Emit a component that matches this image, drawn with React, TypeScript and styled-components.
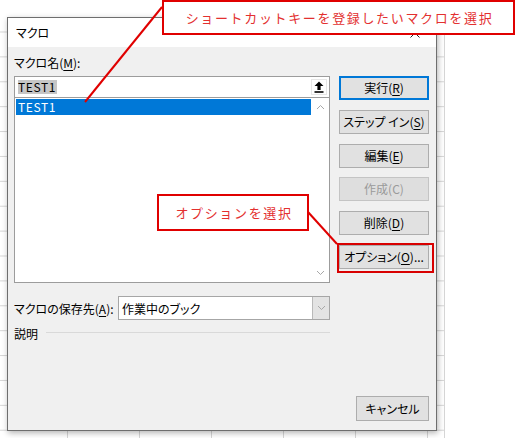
import React from "react";
import styled, { createGlobalStyle } from "styled-components";

const Global = createGlobalStyle`
  html, body { margin: 0; padding: 0; background: #fff; }
  body {
    width: 515px; height: 438px; overflow: hidden;
    font-family: "Noto Sans CJK JP", "Noto Sans", sans-serif;
  }
`;

const Page = styled.div`
  position: relative;
  width: 515px;
  height: 438px;
  overflow: hidden;
  background: #fff;
`;

const Sheet = styled.div`
  width: 445px;
  height: 438px;
  box-sizing: border-box;
  padding: 17px 0 0 7px;
  border-right: 1px solid #d6d6d6;
  background-color: #fff;
  background-image:
    linear-gradient(#fff, #fff),
    linear-gradient(to right, #d6d6d6 1px, transparent 1px),
    linear-gradient(to bottom, #d6d6d6 1px, transparent 1px);
  background-size: 100% 20px, 72px 100%, 100% 24.9px;
  background-repeat: no-repeat, repeat, repeat;
  background-position: 0 0, 67px 0, 0 6.6px;
`;

const Dialog = styled.div`
  width: 430px;
  height: 414px;
  box-sizing: border-box;
  border: 1px solid #6e6e6e;
  background: #f0f0f0;
  box-shadow: 1px 2px 6px rgba(0, 0, 0, 0.3);
  display: flex;
  flex-direction: column;
  font-size: 12px;
  color: #000;
  font-feature-settings: "palt";
`;

const TitleBar = styled.div`
  height: 29px;
  flex: none;
  background: #fff;
  display: flex;
  align-items: center;
  justify-content: space-between;
  padding: 0 16px 0 8px;
`;

const TitleText = styled.span`
  font-size: 12px;
  line-height: 16px;
`;

const Body = styled.div`
  flex: 1;
  display: flex;
  gap: 9px;
  padding: 8px 7px 9px 6px;
  min-height: 0;
`;

const LeftCol = styled.div`
  width: 316px;
  display: flex;
  flex-direction: column;
`;

const Label = styled.div<{ $mb?: number }>`
  height: 16px;
  line-height: 16px;
  white-space: nowrap;
  margin-bottom: ${(p) => p.$mb ?? 0}px;
`;

const Ul = styled.u`
  text-underline-offset: 2px;
`;

const NameInput = styled.div`
  height: 21px;
  box-sizing: border-box;
  border: 1px solid #9c9c9c;
  border-bottom: none;
  background: #fff;
  display: flex;
  align-items: center;
  padding-left: 3px;
  padding-right: 2px;
`;

const SelText = styled.span`
  background: #c6c6c6;
  line-height: 14px;
  padding: 0 1px 0 0;
  letter-spacing: 0.6px;
`;

const UpButton = styled.div`
  margin-left: auto;
  width: 16px;
  height: 16px;
  box-sizing: border-box;
  border: 1px solid #e6e6e6;
  background: #fff;
  display: flex;
  align-items: center;
  justify-content: center;
`;

const List = styled.div`
  height: 186px;
  box-sizing: border-box;
  border: 1px solid #9c9c9c;
  background: #fff;
  display: flex;
`;

const Items = styled.div`
  flex: 1;
  padding: 1px;
`;

const Item = styled.div<{ $selected?: boolean }>`
  height: 16px;
  line-height: 16px;
  padding-left: 2px;
  letter-spacing: 0.6px;
  background: ${(p) => (p.$selected ? "#0078d7" : "transparent")};
  color: ${(p) => (p.$selected ? "#fff" : "#000")};
`;

const ScrollBar = styled.div`
  width: 17px;
  display: flex;
  flex-direction: column;
  justify-content: space-between;
  align-items: center;
  padding: 6px 0 6px;
`;

const SaveRow = styled.div`
  margin-top: 13px;
  height: 24px;
  display: flex;
  align-items: center;
`;

const SaveLabel = styled.div`
  width: 104px;
  white-space: nowrap;
`;

const Select = styled.div`
  flex: 1;
  height: 24px;
  box-sizing: border-box;
  border: 1px solid #a6a6a6;
  background: #fff;
  display: flex;
  align-items: center;
`;

const SelectValue = styled.span`
  flex: 1;
  padding-left: 3px;
`;

const DropButton = styled.div`
  width: 16px;
  align-self: stretch;
  background: #e3e3e3;
  border-left: 1px solid #b9b9b9;
  display: flex;
  align-items: center;
  justify-content: center;
`;

const DescRow = styled.div`
  margin-top: 5px;
  height: 16px;
  display: flex;
  align-items: center;
  gap: 8px;
`;

const Rule = styled.div`
  flex: 1;
  height: 0;
  border-top: 1px solid #d9d9d9;
  margin-top: -1px;
`;

const RightCol = styled.div`
  width: 90px;
  display: flex;
  flex-direction: column;
  gap: 9.8px;
  padding-top: 21px;
`;

const Button = styled.div<{ $default?: boolean; $disabled?: boolean; $w?: number }>`
  height: 24px;
  flex: none;
  width: ${(p) => (p.$w ? `${p.$w}px` : "100%")};
  align-self: flex-end;
  box-sizing: border-box;
  border: ${(p) =>
    p.$default ? "2px solid #0078d7" : p.$disabled ? "1px solid #c4c4c4" : "1px solid #adadad"};
  background: ${(p) => (p.$disabled ? "#dedede" : "#e1e1e1")};
  color: ${(p) => (p.$disabled ? "#9a9a9a" : "#000")};
  display: flex;
  align-items: center;
  justify-content: center;
  white-space: nowrap;
  line-height: 16px;
`;

const CancelButton = styled(Button)`
  margin-top: auto;
  height: 25px;
`;

const Callout = styled.div<{ $x: number; $y: number; $w: number; $h: number }>`
  position: absolute;
  left: ${(p) => p.$x}px;
  top: ${(p) => p.$y}px;
  width: ${(p) => p.$w}px;
  height: ${(p) => p.$h}px;
  box-sizing: border-box;
  border: 2px solid #e00000;
  background: #fff;
  display: flex;
  align-items: center;
  justify-content: center;
  color: #e33030;
  font-family: "Noto Sans CJK JP", sans-serif;
  font-size: 13px;
  letter-spacing: 1.65px;
  white-space: nowrap;
  padding-left: 2px;
`;

const Highlight = styled.div`
  position: absolute;
  left: 337px;
  top: 243px;
  width: 97px;
  height: 30px;
  box-sizing: border-box;
  border: 2px solid #d80000;
`;

const Lines = styled.svg`
  position: absolute;
  left: 0;
  top: 0;
  pointer-events: none;
`;

const Chevron = ({ up }: { up?: boolean }) => (
  <svg width="9" height="6" viewBox="0 0 9 6">
    <path
      d={up ? "M1 5 L4.5 1.5 L8 5" : "M1 1 L4.5 4.5 L8 1"}
      fill="none"
      stroke="#a8a8a8"
      strokeWidth="1"
    />
  </svg>
);

export default function App() {
  return (
    <Page>
      <Global />
      <Sheet>
        <Dialog>
          <TitleBar>
            <TitleText>マクロ</TitleText>
            <svg width="10" height="10" viewBox="0 0 10 10">
              <path d="M0.5 0.5 L9.5 9.5 M9.5 0.5 L0.5 9.5" stroke="#222" strokeWidth="1" />
            </svg>
          </TitleBar>
          <Body>
            <LeftCol>
              <Label $mb={5}>
                マクロ名(<Ul>M</Ul>):
              </Label>
              <NameInput>
                <SelText>TEST1</SelText>
                <UpButton>
                  <svg width="10" height="12" viewBox="0 0 10 12">
                    <path d="M5 0.5 L9.5 5 H6.6 V9 H3.4 V5 H0.5 Z" fill="#000" />
                    <rect x="0.5" y="10.2" width="9" height="1.6" fill="#000" />
                  </svg>
                </UpButton>
              </NameInput>
              <List>
                <Items>
                  <Item $selected>TEST1</Item>
                </Items>
                <ScrollBar>
                  <Chevron up />
                  <Chevron />
                </ScrollBar>
              </List>
              <SaveRow>
                <SaveLabel>
                  マクロの保存先(<Ul>A</Ul>):
                </SaveLabel>
                <Select>
                  <SelectValue>作業中のブック</SelectValue>
                  <DropButton>
                    <Chevron />
                  </DropButton>
                </Select>
              </SaveRow>
              <DescRow>
                <span>説明</span>
                <Rule />
              </DescRow>
            </LeftCol>
            <RightCol>
              <Button $default>
                実行(<Ul>R</Ul>)
              </Button>
              <Button>
                ステップ イン(<Ul>S</Ul>)
              </Button>
              <Button>
                編集(<Ul>E</Ul>)
              </Button>
              <Button $disabled>作成(C)</Button>
              <Button>
                削除(<Ul>D</Ul>)
              </Button>
              <Button>
                オプション(<Ul>O</Ul>)...
              </Button>
              <CancelButton $w={73}>キャンセル</CancelButton>
            </RightCol>
          </Body>
        </Dialog>
      </Sheet>

      <Lines width="515" height="438" viewBox="0 0 515 438">
        <line x1="162" y1="7" x2="85" y2="102" stroke="#e00000" strokeWidth="2" />
        <line x1="308" y1="212" x2="337" y2="244" stroke="#e00000" strokeWidth="2" />
      </Lines>
      <Callout $x={162} $y={0} $w={353} $h={35}>
        ショートカットキーを登録したいマクロを選択
      </Callout>
      <Callout $x={157} $y={194} $w={152} $h={37}>
        オプションを選択
      </Callout>
      <Highlight />
    </Page>
  );
}
